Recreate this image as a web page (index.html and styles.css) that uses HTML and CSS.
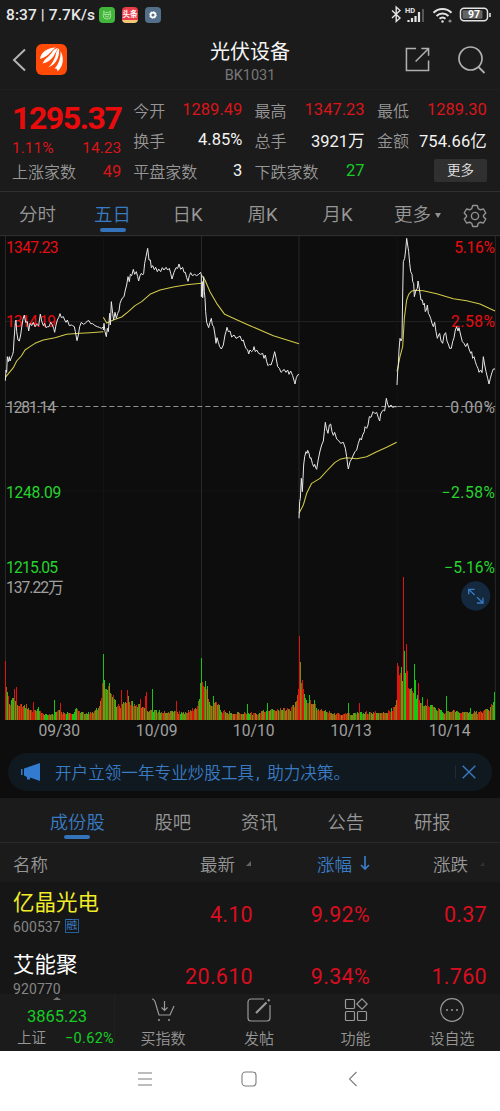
FILE: index.html
```html
<!DOCTYPE html>
<html lang="zh-CN">
<head>
<meta charset="utf-8">
<title>光伏设备 BK1031</title>
<link rel="stylesheet" href="styles.css">
</head>
<body>
<div class="status">
  <span class="clock">8:37 | 7.7K/s</span>
  <svg class="badge" viewBox="0 0 16 16"><rect width="16" height="16" rx="4" fill="#42b53b"/><path d="M4.2 7.5h7.6v1.2a3.8 3.4 0 0 1-7.6 0zM5 7.3 4.6 4.2l2 1.4h2.8l2-1.4-.4 3.1M6.2 9.7h3.6M6.5 7.7v.8M9.5 7.7v.8" fill="none" stroke="#b9ecad" stroke-width=".8"/></svg>
  <span class="badge news">头条</span>
  <svg class="badge" viewBox="0 0 16 16"><rect width="16" height="16" rx="4" fill="#536f89"/><circle cx="8" cy="8" r="2.4" fill="none" stroke="#fff" stroke-width="1.7"/><circle cx="8" cy="8" r="3.5" fill="none" stroke="#fff" stroke-width=".8" stroke-dasharray="1.3 1.4"/></svg>
  <svg class="signals" viewBox="0 0 105 20" fill="none" stroke="#e3e3e3">
    <path d="m1 5.500 8 7.500-3.800 3.500V2L9 5.500 1 13" stroke-width="1.4"/>
    <path d="M17.500 17v-2M21 17v-4M24.500 17v-6M28 17V7" stroke-width="2.2"/><path d="M32 17V4" stroke="#555" stroke-width="2"/>
    <text x="14" y="8" font-size="7.500" stroke="none" fill="#e3e3e3" font-weight="700">HD</text>
    <path d="M42.500 7.700a13 13 0 0 1 18 0M45.500 10.900a9 9 0 0 1 12 0M48.500 13.800a4.500 4.500 0 0 1 6 0" stroke-width="2"/><circle cx="51.500" cy="16.500" r="1.200" fill="#e3e3e3" stroke="none"/><circle cx="59" cy="16" r="1.600" fill="#888" stroke="none"/>
    <rect x="69.500" y="3.300" width="27" height="12.500" rx="3.500" stroke-width="1.5"/><rect x="71.500" y="5.300" width="20" height="8.500" rx="1" fill="#646464" stroke="none"/><path d="M99 8v4" stroke-width="1.6"/>
    <text x="83" y="13.400" font-size="10.500" font-weight="700" text-anchor="middle" stroke="none" fill="#fff">97</text>
  </svg>
</div>

<header class="header">
  <svg class="back" viewBox="0 0 14 24"><path d="M13 1.500 2 12l11 10.500" fill="none" stroke="#b4b4b4" stroke-width="2"/></svg>
  <svg class="logo" viewBox="0 0 31 31"><rect width="31" height="31" rx="6" fill="#ff4a08"/><path d="M4 15C5 8 11 4 20 3.500 15 6 14 12 4 15zM6.500 19.500C9 14 13 13 15.500 9 17.500 5.500 19.500 4.500 22 4 19 9 17 17.500 6.500 19.500zM12 23.500c4-3 7-9 8-14 .5-2.500 1.500-4 3-5C24 11 21 20.500 12 23.500zM21.500 27.500c0-2-.5-3.500-3-3C23 20 25 13 24.500 7c3.500 6 3.500 15-3 20.500z" fill="#fff"/></svg>
  <div class="heading"><h1>光伏设备</h1><p>BK1031</p></div>
  <svg class="share" viewBox="0 0 26 26"><path d="M11.500 1.500H1.500v23h23V14M17 1.500h7.500V9M24 2 11 15" fill="none" stroke="#b0b0b0" stroke-width="1.6"/></svg>
  <svg class="search" viewBox="0 0 28 28"><circle cx="12.5" cy="12.5" r="11.5" fill="none" stroke="#b0b0b0" stroke-width="1.7"/><path d="m20.5 21 6 6" stroke="#b0b0b0" stroke-width="1.8"/></svg>
</header>

<section class="quote">
  <div class="col lead">
    <strong class="price">1295.37</strong>
    <div class="pair up change"><span>1.11%</span><span>14.23</span></div>
    <div class="pair"><span>上涨家数</span><b class="up">49</b></div>
  </div>
  <div class="col">
    <div class="pair"><span>今开</span><b class="up">1289.49</b></div>
    <div class="pair"><span>换手</span><b>4.85%</b></div>
    <div class="pair"><span>平盘家数</span><b>3</b></div>
  </div>
  <div class="col">
    <div class="pair"><span>最高</span><b class="up">1347.23</b></div>
    <div class="pair"><span>总手</span><b>3921万</b></div>
    <div class="pair"><span>下跌家数</span><b class="down">27</b></div>
  </div>
  <div class="col">
    <div class="pair"><span>最低</span><b class="up">1289.30</b></div>
    <div class="pair"><span>金额</span><b class="wide">754.66亿</b></div>
    <div class="pair last"><span class="more">更多</span></div>
  </div>
</section>

<nav class="periods">
  <span>分时</span><span class="active">五日</span><span>日<b>K</b></span><span>周<b>K</b></span><span>月<b>K</b></span><span class="menu">更多<i></i></span>
  <svg viewBox="0 0 24 24" fill="none" stroke="#929292" stroke-width="1.4"><path d="M9.700 1.500h4.600l1 3.200 2 1.100 3.200-.8 2.300 4-2.300 2.400v1.300l2.300 2.300-2.300 4-3.200-.8-2 1.100-1 3.200H9.700l-1-3.200-2-1.100-3.200.8-2.300-4 2.300-2.300v-1.300L1.200 9l2.300-4 3.200.8 2-1.100z" stroke-linejoin="round"/><circle cx="12" cy="12" r="3.600"/></svg>
</nav>

<section class="chart">
  <svg viewBox="0 0 1500 1530">
    <g fill="none" stroke-width="3">
      <path d="M0 2H1500" stroke="#343434"/>
      <path d="M16 260H1486" stroke="#242424"/>
      <path d="M16 768H1486M310 2V1454M1191 2V1454" stroke="#151515"/>
      <path d="M16.500 2V1454M604.500 2V1454M897 2V1454M1486 2V1454" stroke="#282828"/>
      <path d="M16 514.500H1486" stroke="#929292" stroke-dasharray="15 9"/>
    </g>
    <g class="labels left">
      <text x="18" y="53" textLength="158" class="t-up">1347.23</text>
      <text x="18" y="277" textLength="150" class="t-up">1314.19</text>
      <text x="18" y="533" textLength="150">1281.14</text>
      <text x="18" y="788" textLength="166" class="t-down">1248.09</text>
      <text x="18" y="1013" textLength="156" class="t-down">1215.05</text>
      <text x="18" y="1075" textLength="173">137.22万</text>
    </g>
    <g class="labels">
      <text x="1363" y="53" textLength="122" class="t-up">5.16%</text>
      <text x="1353" y="277" textLength="132" class="t-up">2.58%</text>
      <text x="1351" y="533" textLength="134">0.00%</text>
      <text x="1325" y="788" textLength="160" class="t-down">−2.58%</text>
      <text x="1333" y="1013" textLength="152" class="t-down">−5.16%</text>
    </g>
    <g class="average">
      <path d="M16 427 40 398 50 378 64 363 75 345 90 335 105 325 130 315 165 308 200 298 240 295 270 293 310 290M310 247 320 264 340 255 365 246 385 230 405 212 425 200 450 178 480 165 520 156 560 149 604 145M604 120 615 135 630 170 650 205 674 238 700 250 750 272 820 302 897 326M897 835 910 810 920 775 935 745 960 730 980 708 1005 682 1020 673 1040 668 1070 671 1100 665 1130 650 1160 637 1190 622M1191 410 1200 365 1208 335 1213 250 1220 195 1226 178 1234 169 1245 166 1270 167 1310 176 1360 191 1400 197 1440 207 1485 228"/>
    </g>
    <g class="price-line">
      <path d="M16 437 18 405 20 412 22 365 25 380 28 365 30 378 34 368 38 358 40 350 42 315 46 262 48 255 50 290 54 315 58 318 62 300 66 270 69 252 73 240 77 262 82 260 86 288 90 265 95 272 100 262 105 275 110 268 116 272 121 237 125 258 130 272 134 265 138 278 143 275 147 275 152 262 157 270 161 280 164 292 168 270 172 255 176 248 180 236 184 248 190 245 194 255 198 262 202 255 208 272 214 270 218 272 223 275 226 290 231 317 235 300 239 275 244 262 250 268 256 265 262 258 267 257 272 266 278 266 285 272 292 275 298 277 304 280 310 276V285L312 265 315 290 319 305 322 280 325 290 327 262 329 235 331 270 334 200 338 235 341 255 345 232 349 250 353 235 357 228 360 205 364 195 368 188 372 185 376 165 380 150 384 125 388 140 391 118 395 122 400 103 404 118 409 110 413 125 416 138 420 122 424 115 428 120 431 115 434 85 438 65 443 40 447 75 451 75 454 98 458 92 463 104 467 97 472 110 476 102 482 110 487 98 492 105 498 97 503 105 508 100 512 115 516 132 522 112 528 98 533 100 537 87 542 103 548 97 552 112 556 112 560 128 564 139 568 122 572 113 577 122 584 118 590 122 596 118 602 112 604 120V185L607 140 608 188 611 125 613 170 615 190 617 230 620 262 623 270 626 278 630 262 634 250 637 270 641 275 645 300 648 325 651 308 655 322 659 335 664 342 670 330 675 300 678 290 681 277 685 290 690 288 695 306 702 300 708 310 714 307 720 303 726 318 730 315 734 330 738 340 743 345 746 357 750 345 755 350 760 345 762 335 766 350 770 345 776 355 782 358 788 355 792 370 796 360 800 380 804 392 808 388 813 390 818 375 824 350 828 368 833 395 838 400 843 412 848 408 852 403 858 412 863 405 867 418 872 408 878 422 883 440 885 447 889 428 893 420 897 418"/>
      <path d="M897 850 899 800 901 790 904 730 907 770 909 730 911 690 914 665 918 650 921 655 923 646 927 655 930 670 933 668 937 685 941 695 944 688 948 700 950 703 955 672 960 648 965 630 970 618 973 590 976 562 979 580 984 595 988 570 992 567 996 590 1000 601 1004 592 1010 612 1016 617 1022 625 1030 622 1036 640 1040 665 1043 690 1045 702 1050 680 1056 670 1060 660 1065 650 1070 645 1075 625 1080 610 1084 615 1088 600 1093 590 1095 575 1100 580 1104 570 1108 545 1113 547 1119 530 1125 536 1130 532 1135 548 1139 558 1142 537 1146 530 1150 525 1154 528 1159 490 1163 508 1167 517 1173 510 1178 517 1184 515 1190 515"/>
      <path d="M1191 450 1193 410 1195 390 1197 345 1200 310 1203 318 1206 310 1208 180 1210 80 1214 70 1217 45 1220 10 1223 30 1226 50 1229 85 1232 110 1236 118 1238 140 1241 145 1243 185 1248 165 1252 160 1254 138 1257 155 1260 175 1263 195 1267 195 1270 210 1273 205 1276 230 1280 222 1282 210 1285 235 1288 240 1292 250 1296 265 1300 275 1304 262 1308 290 1312 310 1316 300 1319 295 1323 318 1328 325 1332 300 1337 293 1341 318 1346 330 1349 340 1354 340 1358 320 1362 308 1366 285 1370 275 1374 288 1377 278 1382 300 1387 320 1392 325 1397 335 1402 325 1407 342 1412 355 1415 350 1418 370 1422 365 1426 380 1430 392 1434 400 1437 412 1442 405 1446 413 1450 365 1454 390 1458 410 1463 430 1467 447 1471 430 1476 412 1480 402 1485 402"/>
    </g>
    <g id="volume" shape-rendering="crispEdges"></g>
    <g class="dates">
      <text x="178" y="1502">09/30</text><text x="470" y="1502">10/09</text><text x="761" y="1502">10/10</text><text x="1053" y="1502">10/13</text><text x="1349" y="1502">10/14</text>
    </g>
    <circle cx="1427" cy="1083" r="44" fill="#14283e"/>
    <path d="M1424 1080 1406 1063M1406 1078V1063H1424M1431 1087 1449 1104M1449 1088V1104H1431" fill="none" stroke="#397bc1" stroke-width="4"/>
  </svg>
</section>

<div class="notice-wrap"><div class="notice">
  <svg class="horn" viewBox="0 0 19 18" fill="#337bd0"><path d="M19 0v18L9 14.500v2H6V14L3 12.500v-7zM0 6h1.500v6H0z"/></svg>
  <span>开户立领一年专业炒股工具<em>,</em>助力决策。</span>
  <i class="divider"></i>
  <svg class="close" viewBox="0 0 14 14"><path d="m.7.7 12.600 12.600m0-12.600L.7 13.300" stroke="#3979c2" stroke-width="1.400"/></svg>
</div></div>

<nav class="sections"><span class="active">成份股</span><span>股吧</span><span>资讯</span><span>公告</span><span>研报</span></nav>

<div class="table">
  <div class="row head"><span>名称</span><span>最新<i class="tri"></i></span><span class="active">涨幅<svg viewBox="0 0 10 15"><path d="M5 0v13M1 9l4 4 4-4" fill="none" stroke="#397bc4" stroke-width="1.700"/></svg></span><span>涨跌<i class="tri dim"></i></span></div>
  <div class="row stock"><div><h2 class="yellow">亿晶光电</h2><p>600537<i class="tag">融</i></p></div><b>4.10</b><b>9.92%</b><b>0.37</b></div>
  <div class="row stock"><div><h2>艾能聚</h2><p>920770</p></div><b>20.610</b><b>9.34%</b><b>1.760</b></div>
</div>

<nav class="dock">
  <div class="index"><i></i><b>3865.23</b><p><span>上证</span><em>−0.62%</em></p></div>
  <div class="item"><svg viewBox="0 0 24 24"><path d="M1 1c3 0 3 3 4 6l3 10h11l4-9M13.500 3v9M10.500 9.500l3 3 3-3"/><circle cx="8" cy="22" r="1" class="dot"/><circle cx="18" cy="22" r="1" class="dot"/></svg><span>买指数</span></div>
  <div class="item"><svg viewBox="0 0 24 24"><path d="M17 1H4a3 3 0 0 0-3 3v16a3 3 0 0 0 3 3h16a3 3 0 0 0 3-3V7"/><path d="M9 15 19.500 4.500M21 3l1.500-1.500" stroke-width="2.200"/></svg><span>发帖</span></div>
  <div class="item"><svg viewBox="0 0 24 24"><rect x="1.500" y="1.500" width="9" height="9" rx="1"/><path d="m18 .8 5.200 5.200-5.200 5.200L12.800 6z"/><rect x="1.500" y="13.500" width="9" height="9" rx="1"/><rect x="13.500" y="13.500" width="9" height="9" rx="1"/></svg><span>功能</span></div>
  <div class="item"><svg viewBox="0 0 24 24"><circle cx="12" cy="12" r="11.300"/><circle cx="7" cy="12" r="1" class="dot"/><circle cx="12" cy="12" r="1" class="dot"/><circle cx="17" cy="12" r="1" class="dot"/></svg><span>设自选</span></div>
</nav>

<div class="system">
  <svg viewBox="0 0 16 16"><path d="M1 2h14M1 8h14M1 14h14"/></svg>
  <svg viewBox="0 0 16 16"><rect x="1" y="1" width="14" height="14" rx="3.500"/></svg>
  <svg viewBox="0 0 16 16"><path d="M11.500 1 4.500 8l7 7"/></svg>
</div>
<script src="chart.js"></script>
</body>
</html>
```
FILE: styles.css
```css
* { box-sizing: border-box; margin: 0; padding: 0; }
body { width: 500px; height: 1111px; overflow: hidden; display: flex; flex-direction: column; background: #1b1b1b; color: #979797; font-family: Roboto, "Noto Sans CJK SC", sans-serif; font-weight: 350; }
svg { display: block; flex: none; }
i, em { font-style: normal; }
b { font-weight: 400; }
.up { color: #d91519; }
.down { color: #18cc24; }

.status { flex: none; height: 30px; padding: 0 4px 0 6px; display: flex; align-items: center; color: #e8e8e8; }
.clock { width: 93px; font-size: 15.5px; font-weight: 500; white-space: nowrap; letter-spacing: .1px; }
.badge { width: 16px; height: 16px; flex: none; margin-right: 7px; }
.news { border-radius: 4px; background: linear-gradient(#e93b48 80%, #f2c778 80%); color: #fff; font-size: 7.5px; line-height: 15px; text-align: center; font-weight: 700; white-space: nowrap; }
.signals { width: 105px; height: 20px; margin-left: auto; }

.header { flex: none; height: 60px; padding: 0 14px 0 12px; display: flex; align-items: center; border-bottom: 1px solid #202020; }
.back { width: 14px; height: 24px; }
.logo { width: 31px; height: 31px; margin-left: 10px; }
.heading { flex: 1; padding: 5px 0 0 28px; text-align: center; }
.heading h1 { font-size: 20px; font-weight: 400; line-height: 26px; color: #f4f4f4; }
.heading p { font-size: 14.5px; font-weight: 400; line-height: 21px; color: #777; }
.share { width: 25px; height: 25px; }
.search { width: 28px; height: 28px; margin-left: 28px; }

.quote { flex: none; height: 101px; padding: 5px 13px 0 12px; display: grid; grid-template-columns: 109px 109px 110px 110px; column-gap: 12.3px; }
.col { display: grid; grid-template-rows: 29px 31px 31px; }
.lead { grid-template-rows: 42px 21px 26px; }
.price { font-size: 32px; line-height: 46px; letter-spacing: -1.45px; color: #ea0b0c; white-space: nowrap; }
.pair { display: flex; justify-content: space-between; align-items: center; font-size: 16px; white-space: nowrap; }
.pair b { font-size: 16.5px; color: #f2f2f2; }
.pair .up { color: #d91519; }
.pair .down { color: #18cc24; }
.change { color: #d91519; font-weight: 400; font-size: 15.5px; }
.wide { letter-spacing: .1px; }
.last { justify-content: flex-end; }
.more { width: 53px; height: 23px; border-radius: 2px; background: #303030; color: #e5e5e5; font-size: 13.5px; line-height: 22px; text-align: center; }

.periods { flex: none; height: 44px; border-top: 1px solid #303030; display: grid; grid-template-columns: repeat(5, 75px) 85px 30px; font-size: 18.5px; line-height: 47px; text-align: center; align-items: center; }
.periods svg { width: 24px; height: 24px; justify-self: center; }
.active { color: #397bc4; position: relative; }
.periods .active::after, .sections .active::after { content: ""; position: absolute; left: calc(50% - 13px); bottom: 7px; width: 26px; height: 4px; border-radius: 2px; background: #3472b9; }
.menu { display: flex; justify-content: center; align-items: center; gap: 4px; }
.menu i { border: 3px solid transparent; border-top: 5px solid #929292; border-bottom: 0; }

.chart { flex: none; height: 510px; background: #0d0d0d; }
.chart svg { width: 500px; height: 510px; }
.chart text { font-size: 47px; font-weight: 400; fill: #a0a0a0; }
.chart .t-up { fill: #e80c12; }
.chart .t-down { fill: #25d42d; }
.dates { text-anchor: middle; }
.average { fill: none; stroke: #d2ca48; stroke-width: 3.2; stroke-linejoin: round; }
.price-line { fill: none; stroke: #e8e8e8; stroke-width: 3; stroke-linejoin: round; }

.notice-wrap { flex: none; height: 53px; background: #0d0d0d; padding: 8px 8px 0; }
.notice { height: 38px; border-radius: 19px; background: #101920; display: flex; align-items: center; padding: 0 16px 0 13px; color: #397bc4; font-size: 16.6px; }
.horn { width: 19px; height: 18px; margin-right: 15px; }
.notice em { display: inline-block; width: 13px; padding-left: 2px; font-weight: 400; }
.divider { width: 1px; height: 14px; margin-left: auto; background: #1b2b3b; }
.close { width: 14px; height: 14px; margin-left: 6px; }

.sections { flex: none; height: 45px; border-bottom: 1px solid #292929; display: grid; grid-template-columns: 104.5px 86.5px 86.5px 86.5px 86.5px; padding-left: 25px; font-size: 18.3px; line-height: 49px; text-align: center; }
.sections span { height: 44px; }
.sections .active::after { bottom: 3px; }
.table { flex: none; height: 151px; overflow: hidden; background: #161616; }
.row { display: grid; grid-template-columns: 140px 100px 117px 117px; padding: 0 13px; align-items: center; }
.row > :not(:first-child) { text-align: right; justify-self: end; }
.head { height: 39px; padding-top: 2px; background: #1b1b1b; font-size: 17.5px; }
.head span { display: flex; align-items: center; }
.head svg { width: 10px; height: 15px; margin-left: 8px; }
.tri { border-left: 5px solid transparent; border-bottom: 5px solid #656565; margin: 0 2px 0 11px; }
.tri.dim { border-bottom: 4px solid #333; border-left-width: 4px; margin: 0 3px 0 12px; }
.stock { height: 62px; }
.stock h2 { font-size: 21.5px; font-weight: 400; line-height: 27px; color: #fff; white-space: nowrap; }
.stock .yellow { color: #f1eb28; }
.stock p { display: flex; align-items: center; height: 12px; margin: 5px 0; font-size: 14px; font-weight: 400; line-height: 12px; letter-spacing: .1px; color: #858585; }
.stock b { font-size: 21.5px; padding-top: 2px; letter-spacing: .3px; color: #d80e20; }
.tag { width: 14px; height: 14px; margin: -2px 0 0 4px; border: 1px solid #245f9d; color: #397bc4; font-size: 11px; line-height: 11px; text-align: center; }

.dock { flex: none; height: 57px; display: grid; grid-template-columns: 115px 96px 96px 97px 96px; background: #1b1b1b; }
.index { display: flex; flex-direction: column; align-items: center; padding-top: 3px; border-right: 1px solid #202020; color: #18cc24; }
.index i { border: 4px solid transparent; border-bottom: 3px solid #777; border-top: 0; }
.index b { font-size: 16.5px; line-height: 23px; margin-top: 5px; }
.index p { width: 100%; display: flex; justify-content: space-between; padding: 1px 0 0 17px; font-size: 14.5px; line-height: 20px; white-space: nowrap; }
.index p span { color: #979797; }
.index em { font-weight: 400; letter-spacing: .3px; }
.item { display: flex; flex-direction: column; align-items: center; padding-top: 4px; font-size: 15px; line-height: 22px; }
.item svg { width: 24px; height: 24px; margin-bottom: 6px; fill: none; stroke: #999; stroke-width: 1.2; }
.item .dot { fill: #999; stroke: none; }

.system { flex: none; height: 60px; background: #fff; display: flex; justify-content: center; gap: 88px; padding: 20px 2px 0 0; }
.system svg { width: 16px; height: 16px; fill: none; stroke: #7c7c7c; stroke-width: 1.1; }
```
FILE: chart.js
```js
// Volume bars: [x, height] envelope, interpolated, with isolated peaks on top.
const envelope = [
  [16, 90], [22, 75], [30, 50], [45, 60], [55, 44], [80, 42], [95, 25], [115, 34], [130, 16], [155, 14],
  [175, 26], [190, 20], [220, 17], [230, 35], [245, 20], [285, 22], [300, 50], [308, 100], [318, 90], [335, 85],
  [350, 42], [370, 45], [385, 60], [400, 47], [430, 34], [450, 28], [490, 22], [520, 25], [545, 20],
  [570, 26], [590, 35], [604, 108], [620, 95], [630, 46], [655, 45], [665, 25], [700, 20], [740, 20], [775, 17],
  [790, 25], [830, 30], [870, 30], [890, 52], [897, 110], [905, 95], [918, 56], [940, 48], [955, 28], [980, 24],
  [1010, 17], [1050, 17], [1090, 22], [1130, 21], [1160, 22], [1182, 32], [1190, 75], [1195, 150], [1213, 140],
  [1225, 98], [1245, 75], [1260, 50], [1300, 38], [1330, 22], [1360, 25], [1400, 20], [1440, 23], [1460, 30], [1476, 35], [1485, 60]
];
const peaks = {
  16: [175, 0], 22: [83, 1], 43: [91, 0], 49: [97, 0], 100: [52, 0], 163: [60, 1], 181: [49, 0],
  310: [198, 1], 313: [120, 1], 328: [111, 1], 364: [88, 0], 382: [90, 0], 421: [62, 0], 436: [72, 0], 439: [82, 0],
  457: [92, 1], 529: [57, 0], 604: [184, 1], 607: [114, 0], 616: [117, 1], 640: [72, 1], 742: [48, 1], 802: [49, 1],
  898: [250, 0], 901: [172, 2], 907: [118, 0], 928: [75, 1], 943: [60, 1], 1045: [51, 1], 1078: [50, 0],
  1192: [170, 0], 1195: [160, 0], 1204: [157, 1], 1210: [429, 0], 1213: [205, 1], 1219: [228, 0], 1222: [145, 0],
  1243: [168, 1], 1246: [120, 1], 1255: [110, 0], 1267: [68, 1], 1282: [62, 0], 1339: [72, 1], 1411: [34, 1], 1474: [48, 0], 1483: [83, 1]
};
const colors = ['#e0140f', '#16c814', '#7e8514', '#a9570f'];
const group = document.getElementById('volume');
let seed = 37;
const random = () => (seed = (seed * 16807) % 2147483647) / 2147483647;
for (let x = 16; x <= 1484; x += 3) {
  let k = 0;
  while (envelope[k + 1][0] < x) k++;
  const [x0, h0] = envelope[k], [x1, h1] = envelope[k + 1];
  let height = (h0 + (h1 - h0) * (x - x0) / (x1 - x0)) * (0.8 + random() * 0.4);
  let tone = Math.floor(random() * 4);
  // Snap near a listed peak, since its x may fall between two bar slots.
  const peak = peaks[x] || peaks[x + 1] || peaks[x - 1];
  if (peak) [height, tone] = peak;
  const bar = document.createElementNS('http://www.w3.org/2000/svg', 'rect');
  bar.setAttribute('x', x - 1);
  bar.setAttribute('y', 1454 - height);
  bar.setAttribute('width', 3);
  bar.setAttribute('height', height);
  bar.setAttribute('fill', colors[tone]);
  group.appendChild(bar);
}
```
